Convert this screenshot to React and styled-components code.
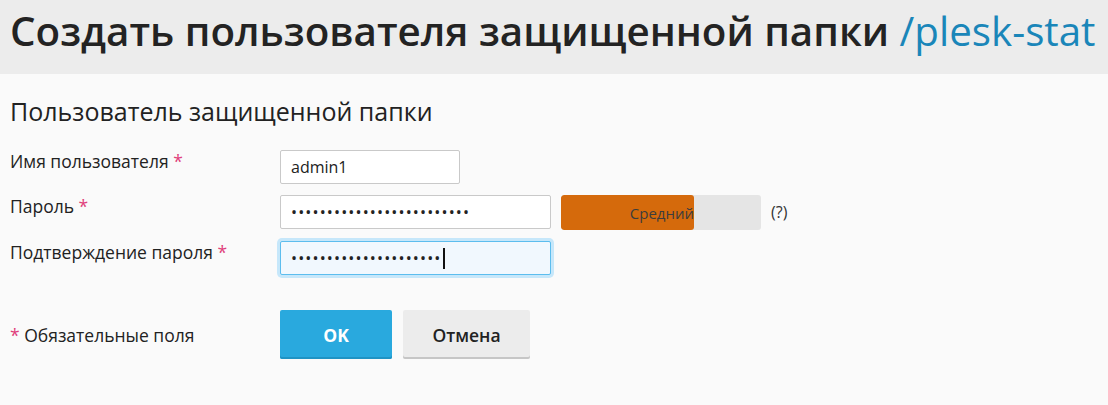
import React from 'react';
import styled, { createGlobalStyle } from 'styled-components';

const GlobalStyle = createGlobalStyle`
  html, body {
    margin: 0;
    padding: 0;
    background: #fafafa;
  }
  body {
    font-family: "Open Sans", "Liberation Sans", sans-serif;
    color: #222;
  }
`;

const Header = styled.div`
  background: #ececec;
  height: 74px;
  box-sizing: border-box;
  padding: 7px 10px 0;
`;

const Title = styled.h1`
  margin: 0;
  font-size: 40.3px;
  line-height: 48px;
  font-weight: 600;
  color: #232323;
  white-space: nowrap;
  span {
    color: #1a86b9;
    font-weight: 400;
  }
`;

const Content = styled.div`
  padding: 20px 10px 0;
`;

const SectionTitle = styled.h2`
  margin: 0 0 22px;
  font-size: 25px;
  font-weight: 400;
  line-height: 34px;
  color: #222;
`;

const Form = styled.div`
  display: flex;
  flex-direction: column;
  gap: 11px;
`;

const Row = styled.div`
  display: flex;
  align-items: flex-start;
`;

const Label = styled.label`
  width: 270px;
  flex-shrink: 0;
  font-size: 17.5px;
  line-height: 22px;
  color: #222;
`;

const Req = styled.span`
  color: #e0407b;
`;

const Input = styled.input`
  box-sizing: border-box;
  width: ${p => p.$w}px;
  height: 34px;
  padding: 0 10px;
  font-family: "Open Sans", "Liberation Sans", sans-serif;
  font-size: 16px;
  color: #222;
  border: 1px solid ${p => (p.$focus ? '#5cbdee' : '#c9c9c9')};
  border-radius: 2px;
  background: ${p => (p.$focus ? '#f1f8fe' : '#fff')};
  box-shadow: ${p => (p.$focus ? '0 0 0 3px #c6e7fa' : 'none')};
  outline: none;
  letter-spacing: ${p => (p.type === 'password' ? '1.15px' : '0')};
`;

const Meter = styled.div`
  margin-left: 10px;
  width: 200px;
  height: 35px;
  border-radius: 3px;
  background: #e5e5e5;
  display: flex;
  overflow: hidden;
`;

const MeterFill = styled.div`
  background: #d56a0c;
  border-radius: 3px;
  display: flex;
  align-items: center;
  justify-content: flex-end;
  font-size: 15px;
  color: #3d3d3d;
`;

const Help = styled.span`
  margin-left: 10px;
  font-size: 16px;
  line-height: 35px;
  color: #333;
`;

const FieldWrap = styled.div`
  position: relative;
`;

const Caret = styled.span`
  position: absolute;
  top: 7px;
  left: 163px;
  width: 2px;
  height: 21px;
  background: #111;
`;

const Footer = styled.div`
  display: flex;
  align-items: center;
  margin-top: 35px;
`;

const Note = styled.div`
  width: 270px;
  font-size: 17.5px;
  color: #222;
`;

const Buttons = styled.div`
  display: flex;
  gap: 11px;
`;

const Button = styled.button`
  font-family: "Open Sans", "Liberation Sans", sans-serif;
  height: 49px;
  width: ${p => p.$w}px;
  border: none;
  border-radius: 2px;
  font-size: 17.5px;
  font-weight: ${p => (p.$primary ? 700 : 600)};
  color: ${p => (p.$primary ? '#fff' : '#222')};
  background: ${p => (p.$primary ? '#29a9de' : '#ececec')};
  box-shadow: inset 0 -2px 0 ${p => (p.$primary ? '#1f93c4' : '#c6c6c6')};
  cursor: pointer;
`;

export default function App() {
  return (
    <>
      <GlobalStyle />
      <Header>
        <Title>
          Создать пользователя защищенной папки <span>/plesk-stat</span>
        </Title>
      </Header>
      <Content>
        <SectionTitle>Пользователь защищенной папки</SectionTitle>
        <Form>
          <Row>
            <Label>
              Имя пользователя <Req>*</Req>
            </Label>
            <Input $w={180} defaultValue="admin1" readOnly />
          </Row>
          <Row>
            <Label>
              Пароль <Req>*</Req>
            </Label>
            <Input $w={271} type="password" defaultValue="abcdefghijklmnopqrstuvwxy" readOnly />
            <Meter>
              <MeterFill style={{ width: '133px' }}>Средний</MeterFill>
            </Meter>
            <Help>(?)</Help>
          </Row>
          <Row>
            <Label>
              Подтверждение пароля <Req>*</Req>
            </Label>
            <FieldWrap>
              <Input $w={271} $focus type="password" defaultValue="abcdefghijklmnopqrstu" readOnly />
              <Caret />
            </FieldWrap>
          </Row>
        </Form>
        <Footer>
          <Note>
            <Req>*</Req> Обязательные поля
          </Note>
          <Buttons>
            <Button $primary $w={112}>OK</Button>
            <Button $w={127}>Отмена</Button>
          </Buttons>
        </Footer>
      </Content>
    </>
  );
}
